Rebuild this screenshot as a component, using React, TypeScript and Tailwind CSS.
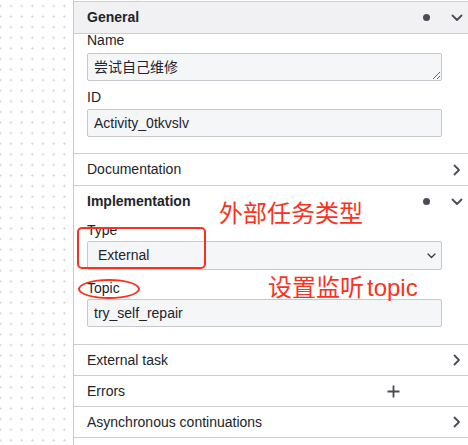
import React from 'react'

const font = { fontFamily: '"Liberation Sans", "Noto Sans CJK SC", sans-serif' }

function ChevronDown() {
  return (
    <svg width="12" height="8" viewBox="0 0 12 8" fill="none">
      <path d="M1.5 1.5L6 6L10.5 1.5" stroke="#4a4c55" strokeWidth="1.8" strokeLinecap="round" strokeLinejoin="round" />
    </svg>
  )
}

function ChevronRight() {
  return (
    <svg width="8" height="12" viewBox="0 0 8 12" fill="none">
      <path d="M1.5 1.5L6 6L1.5 10.5" stroke="#4a4c55" strokeWidth="1.8" strokeLinecap="round" strokeLinejoin="round" />
    </svg>
  )
}

function Plus() {
  return (
    <svg width="13" height="13" viewBox="0 0 13 13" fill="none">
      <path d="M6.5 0.5V12.5M0.5 6.5H12.5" stroke="#4a4c55" strokeWidth="1.8" />
    </svg>
  )
}

function GroupHeader({ title, bold, dot, open, shaded }: { title: string; bold?: boolean; dot?: boolean; open?: boolean; shaded?: boolean }) {
  return (
    <div className={`flex items-center h-[31px] pl-[13px] ${shaded ? 'bg-[#f1f1f3]' : 'bg-white'}`}>
      <span className={`flex-1 text-[14px] text-[#22242a] ${bold ? 'font-bold' : ''}`}>{title}</span>
      {dot && <span className="w-[7px] h-[7px] rounded-full bg-[#4a4c55] mr-[16px]" />}
      <span className="w-[22px] flex items-center justify-center">
        {open ? <ChevronDown /> : <ChevronRight />}
      </span>
    </div>
  )
}

function Row({ title, plus }: { title: string; plus?: boolean }) {
  return (
    <div className="flex items-center h-[31px] pl-[13px] border-b border-[#cdced3]">
      <span className="flex-1 text-[14px] text-[#22242a]">{title}</span>
      {plus ? (
        <span className="w-[24px] flex items-center justify-center mr-[63px]">
          <Plus />
        </span>
      ) : (
        <span className="w-[22px] flex items-center justify-center">
          <ChevronRight />
        </span>
      )}
    </div>
  )
}

export default function App() {
  return (
    <div className="relative flex w-[468px] h-[445px] bg-white overflow-hidden" style={font}>
      {/* Canvas */}
      <div className="w-[73px] h-full bg-white bg-[radial-gradient(circle,#d2d3d7_0.9px,transparent_1.2px)] bg-[size:10.7px_10.6px] bg-[position:5.6px_0.7px]" />

      {/* Properties panel */}
      <div className="flex-1 flex flex-col border-l border-[#c9cad0] bg-white">
        <div className="h-px" />

        {/* General */}
        <div className="border-t border-b border-[#cdced3]">
          <GroupHeader title="General" bold dot open shaded />
        </div>
        <div className="pl-[13px] pr-[26px] pb-[16px] border-b border-[#cdced3]">
          <div className="text-[14px] leading-4 text-[#22242a] -mt-[2px] mb-[5px]">Name</div>
          <textarea
            className="block w-full h-[28px] rounded-[2px] border border-[#c6c8cd] bg-[#f5f6f8] px-[6px] text-[14px] leading-[26px] text-[#22242a] resize-y overflow-hidden outline-none"
            style={font}
            defaultValue="尝试自己维修"
          />
          <div className="text-[14px] leading-4 text-[#22242a] mt-[8px] mb-[4px]">ID</div>
          <div className="h-[28px] rounded-[2px] border border-[#c6c8cd] bg-[#f5f6f8] px-[6px] text-[14px] leading-[26px] text-[#22242a]">
            Activity_0tkvslv
          </div>
        </div>

        {/* Documentation */}
        <div className="border-b border-[#cdced3]">
          <GroupHeader title="Documentation" />
        </div>

        {/* Implementation */}
        <GroupHeader title="Implementation" bold dot open />
        <div className="pl-[13px] pr-[26px] pb-[17px] border-b border-[#cdced3]">
          <div className="text-[14px] leading-4 text-[#22242a] mt-[5px] mb-[3px]">Type</div>
          <div className="flex items-center h-[29px] rounded-[2px] border border-[#c6c8cd] bg-[#f5f6f8] pl-[10px] pr-[5px] text-[14px] text-[#22242a]">
            <span className="flex-1">External</span>
            <svg width="9" height="6" viewBox="0 0 9 6" fill="none">
              <path d="M1 1L4.5 4.5L8 1" stroke="#33353b" strokeWidth="1.2" strokeLinecap="round" strokeLinejoin="round" />
            </svg>
          </div>
          <div className="text-[14px] leading-4 text-[#22242a] mt-[10px] mb-[3px]">Topic</div>
          <div className="h-[28px] rounded-[2px] border border-[#c6c8cd] bg-[#f5f6f8] px-[6px] text-[14px] leading-[26px] text-[#22242a]">
            try_self_repair
          </div>
        </div>

        <Row title="External task" />
        <Row title="Errors" plus />
        <Row title="Asynchronous continuations" />
      </div>

      {/* Annotations */}
      <div className="absolute left-[77px] top-[227px] w-[129px] h-[42px] rounded-[5px] border-2 border-[#f8321f]" />
      <div className="absolute left-[78px] top-[279px] w-[62px] h-[20px] rounded-[50%] border-2 border-[#f8321f]" />
      <div className="absolute left-[219px] top-[202px] text-[24px] leading-6 text-[#f8321f]">外部任务类型</div>
      <div className="absolute left-[268px] top-[276px] text-[24px] leading-6 text-[#f8321f]">
        设置监听<span className="ml-[3px]">topic</span>
      </div>
    </div>
  )
}
